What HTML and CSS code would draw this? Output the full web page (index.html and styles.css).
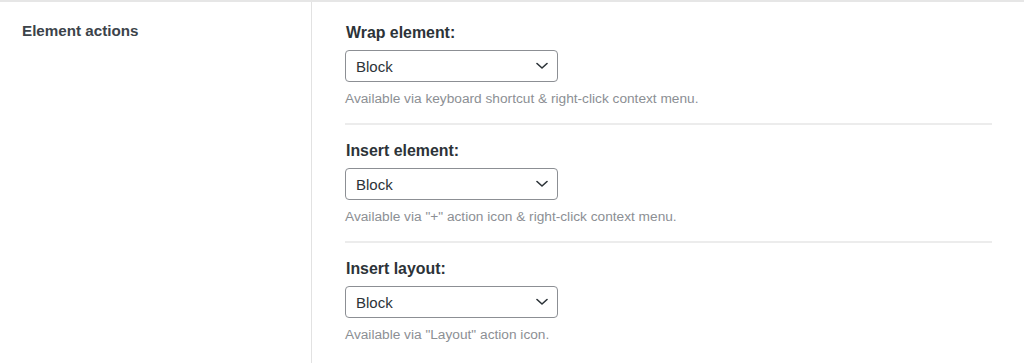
FILE: index.html
```html
<!DOCTYPE html>
<html>
<head>
<meta charset="utf-8">
<link rel="stylesheet" href="styles.css">
</head>
<body>
<div class="page">
  <div class="side">
    <h2 class="side-title">Element actions</h2>
  </div>
  <div class="main">
    <div class="field first">
      <label class="field-label">Wrap element:</label>
      <div class="select"><span>Block</span><svg class="chev" viewBox="0 0 12 8" width="12" height="8"><path d="M1 1.5 L6 6 L11 1.5" fill="none" stroke="#2c3338" stroke-width="1.6" stroke-linecap="round" stroke-linejoin="round"/></svg></div>
      <p class="desc">Available via keyboard shortcut &amp; right-click context menu.</p>
    </div>
    <div class="field">
      <label class="field-label">Insert element:</label>
      <div class="select"><span>Block</span><svg class="chev" viewBox="0 0 12 8" width="12" height="8"><path d="M1 1.5 L6 6 L11 1.5" fill="none" stroke="#2c3338" stroke-width="1.6" stroke-linecap="round" stroke-linejoin="round"/></svg></div>
      <p class="desc">Available via "+" action icon &amp; right-click context menu.</p>
    </div>
    <div class="field last">
      <label class="field-label">Insert layout:</label>
      <div class="select"><span>Block</span><svg class="chev" viewBox="0 0 12 8" width="12" height="8"><path d="M1 1.5 L6 6 L11 1.5" fill="none" stroke="#2c3338" stroke-width="1.6" stroke-linecap="round" stroke-linejoin="round"/></svg></div>
      <p class="desc">Available via "Layout" action icon.</p>
    </div>
  </div>
</div>
</body>
</html>
```
FILE: styles.css
```css
html, body {
  margin: 0;
  padding: 0;
  background: #fff;
}
body {
  font-family: "Liberation Sans", Arial, sans-serif;
  color: #1d2327;
}
.page {
  display: flex;
  border-top: 2px solid #e6e6e6;
  height: 361px;
  overflow: hidden;
}
.side {
  width: 312px;
  border-right: 1px solid #e2e2e2;
  box-sizing: border-box;
  padding: 20px 22px;
}
.side-title {
  margin: 0;
  font-size: 15.2px;
  font-weight: bold;
  color: #3c434a;
  line-height: 18px;
}
.main {
  flex: none;
  width: 647px;
  margin-left: 33px;
  display: flex;
  flex-direction: column;
}
.field {
  padding-top: 17px;
  padding-bottom: 16px;
  border-bottom: 2px solid #ececec;
}
.field.first {
  padding-top: 22px;
}
.field.last {
  border-bottom: none;
}
.field-label {
  display: block;
  font-size: 15.9px;
  font-weight: bold;
  color: #2c3338;
  line-height: 18px;
  margin: 0 0 8px 1px;
}
.select {
  width: 213px;
  height: 32px;
  box-sizing: border-box;
  border: 1px solid #8c8f94;
  border-radius: 4px;
  display: flex;
  align-items: center;
  justify-content: space-between;
  padding: 0 9px 0 10px;
  font-size: 15px;
  color: #2c3338;
}
.chev {
  display: block;
}
.desc {
  margin: 9px 0 0 0;
  font-size: 13.7px;
  line-height: 16px;
  color: #8c8f94;
}
```
